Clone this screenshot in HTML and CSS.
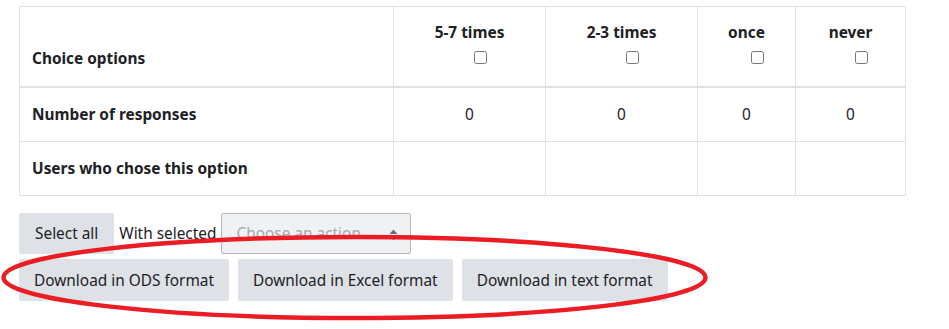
FILE: index.html
```html
<!DOCTYPE html>
<html lang="en">
<head>
<meta charset="utf-8">
<title>Choice responses</title>
<link rel="stylesheet" href="styles.css">
</head>
<body>
<div class="page">
  <table class="results">
    <colgroup>
      <col class="c-label">
      <col class="c-wide">
      <col class="c-wide">
      <col class="c-once">
      <col class="c-never">
    </colgroup>
    <thead>
      <tr>
        <th class="row-head">Choice options</th>
        <th class="opt"><div>5-7 times</div><div class="cb"><input type="checkbox" aria-label="5-7 times"></div></th>
        <th class="opt"><div>2-3 times</div><div class="cb"><input type="checkbox" aria-label="2-3 times"></div></th>
        <th class="opt"><div>once</div><div class="cb"><input type="checkbox" aria-label="once"></div></th>
        <th class="opt"><div>never</div><div class="cb"><input type="checkbox" aria-label="never"></div></th>
      </tr>
    </thead>
    <tbody>
      <tr>
        <th class="row-head body-head">Number of responses</th>
        <td class="num">0</td>
        <td class="num">0</td>
        <td class="num">0</td>
        <td class="num">0</td>
      </tr>
      <tr>
        <th class="row-head body-head">Users who chose this option</th>
        <td></td>
        <td></td>
        <td></td>
        <td></td>
      </tr>
    </tbody>
  </table>

  <div class="actions">
    <button class="btn btn-select" type="button">Select all</button>
    <span class="with-label">With selected</span>
    <span class="select-wrap">
      <select class="action-select" disabled>
        <option>Choose an action</option>
      </select>
      <svg class="select-caret" width="9" height="12" viewBox="0 0 9 12" aria-hidden="true">
        <path d="M4.5 0.5 L8.5 5 L0.5 5 Z" fill="#6b7178"/>
        <path d="M0.5 6.8 L8.5 6.8 L4.5 11.3 Z" fill="#6b7178"/>
      </svg>
    </span>
  </div>

  <div class="downloads">
    <button class="btn btn-dl" type="button">Download in ODS format</button>
    <button class="btn btn-dl" type="button">Download in Excel format</button>
    <button class="btn btn-dl" type="button">Download in text format</button>
  </div>
</div>

<svg class="annotation" width="949" height="329" viewBox="0 0 949 329" aria-hidden="true">
  <ellipse cx="354.5" cy="277.5" rx="351" ry="40.5" fill="none" stroke="#ec1c24" stroke-width="4.5"/>
</svg>
</body>
</html>
```
FILE: styles.css
```css
html, body {
  margin: 0;
  padding: 0;
  background: #ffffff;
}

body {
  font-family: "Noto Sans", "Liberation Sans", sans-serif;
  font-size: 15.4px;
  line-height: 23px;
  color: #1d2125;
}

.page {
  padding: 6px 0 0 19px;
}

.results {
  border-collapse: collapse;
  table-layout: fixed;
  width: 886px;
  border: 1px solid #dee2e6;
}

.c-label { width: 374px; }
.c-wide { width: 152px; }
.c-once { width: 98px; }
.c-never { width: 110px; }

.results th,
.results td {
  border: 1px solid #dee2e6;
  line-height: 23px;
}

.results thead th {
  border-bottom: 2px solid #dee2e6;
  font-weight: 700;
  padding: 14px 12px 22px;
  vertical-align: bottom;
  text-align: center;
}

.results thead th.row-head {
  text-align: left;
  padding-bottom: 16px;
}

.cb {
  display: flex;
  justify-content: center;
  padding: 7px 0 0 21px;
  height: 13px;
}

.cb input {
  margin: 0;
  width: 13px;
  height: 13px;
}

.results tbody th,
.results tbody td {
  padding: 15px 12px;
  vertical-align: middle;
}

.body-head {
  text-align: left;
  font-weight: 700;
}

.num {
  text-align: center;
}

.actions {
  display: flex;
  align-items: center;
  margin-top: 17px;
  height: 41px;
}

.btn {
  font-family: inherit;
  font-size: 15.4px;
  line-height: 23px;
  color: #1d2125;
  background: #dee2e6;
  border: 1px solid #dee2e6;
  border-radius: 2px;
  padding: 0 14px;
  margin: 0;
}

.btn-select {
  height: 41px;
  padding: 0 15px;
}

.with-label {
  margin: 0 5px;
}

.select-wrap {
  position: relative;
  display: inline-block;
}

.action-select {
  appearance: none;
  -webkit-appearance: none;
  font-family: inherit;
  font-size: 15.4px;
  line-height: 23px;
  width: 190px;
  height: 41px;
  padding: 0 14px;
  margin: 0;
  color: #a3a8ad;
  background: #eff1f3;
  border: 1px solid #b2b6ba;
  border-radius: 2px;
  opacity: 1;
  display: block;
}

.select-caret {
  position: absolute;
  right: 13px;
  top: 16px;
}

.downloads {
  display: flex;
  gap: 9px;
  margin-top: 5px;
}

.btn-dl {
  height: 42px;
}

.annotation {
  position: absolute;
  left: 0;
  top: 0;
  pointer-events: none;
}
```
